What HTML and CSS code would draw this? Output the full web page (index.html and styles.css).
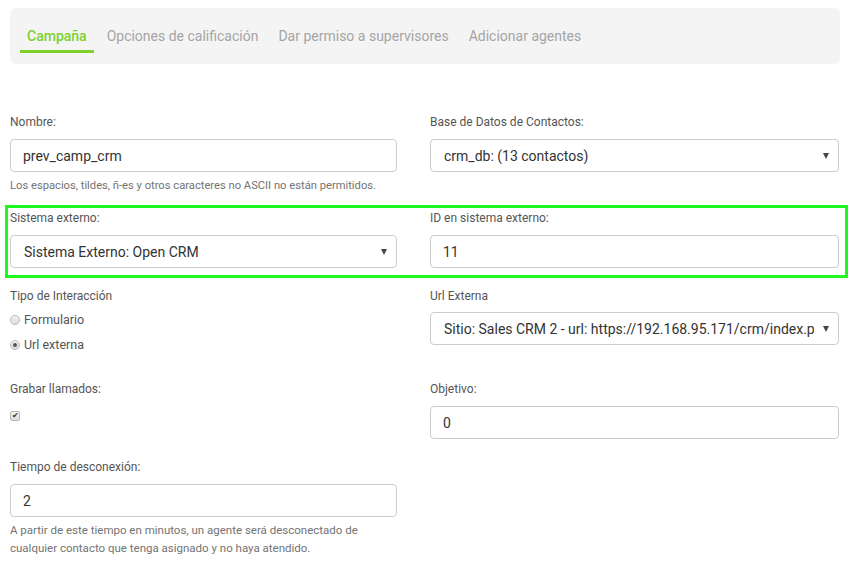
FILE: index.html
```html
<!DOCTYPE html>
<html lang="es">
<head>
  <meta charset="UTF-8">
  <meta name="viewport" content="width=device-width, initial-scale=1.0">
  <title>Campaña</title>
  <link rel="stylesheet" href="styles.css">
</head>
<body>
  <div class="page">
    <ul class="tabs">
      <li class="tab active">Campaña</li>
      <li class="tab">Opciones de calificación</li>
      <li class="tab">Dar permiso a supervisores</li>
      <li class="tab">Adicionar agentes</li>
    </ul>

    <form class="campaign-form">
      <div class="form-row first-row">
        <div class="field">
          <label class="field-label">Nombre:</label>
          <input class="control" type="text" value="prev_camp_crm">
          <p class="help nowrap">Los espacios, tildes, ñ-es y otros caracteres no ASCII no están permitidos.</p>
        </div>
        <div class="field">
          <label class="field-label">Base de Datos de Contactos:</label>
          <div class="select-wrap">
            <select class="control">
              <option>crm_db: (13 contactos)</option>
            </select>
          </div>
        </div>
      </div>

      <div class="form-row highlight">
        <div class="field">
          <label class="field-label">Sistema externo:</label>
          <div class="select-wrap">
            <select class="control">
              <option>Sistema Externo: Open CRM</option>
            </select>
          </div>
        </div>
        <div class="field">
          <label class="field-label">ID en sistema externo:</label>
          <input class="control" type="text" value="11">
        </div>
      </div>

      <div class="form-row interaction-row">
        <div class="field">
          <label class="field-label group-label">Tipo de Interacción</label>
          <label class="option"><input type="radio" name="tipo"> Formulario</label>
          <label class="option"><input type="radio" name="tipo" checked> Url externa</label>
        </div>
        <div class="field">
          <label class="field-label url-label">Url Externa</label>
          <div class="select-wrap">
            <select class="control">
              <option>Sitio: Sales CRM 2 - url: https://192.168.95.171/crm/index.php</option>
            </select>
          </div>
        </div>
      </div>

      <div class="form-row record-row">
        <div class="field">
          <label class="field-label">Grabar llamados:</label>
          <label class="option"><input type="checkbox" checked></label>
        </div>
        <div class="field">
          <label class="field-label">Objetivo:</label>
          <input class="control" type="text" value="0">
        </div>
      </div>

      <div class="form-row timeout-row">
        <div class="field">
          <label class="field-label">Tiempo de desconexión:</label>
          <input class="control" type="text" value="2">
          <p class="help">A partir de este tiempo en minutos, un agente será desconectado de cualquier contacto que tenga asignado y no haya atendido.</p>
        </div>
      </div>
    </form>
  </div>
</body>
</html>
```

FILE: styles.css
```css
/* Campaign form */
body {
  margin: 0;
  font-family: Roboto, Lato, sans-serif;
  color: #555;
  background-color: #fff;
}

.page {
  padding: 8px 11px 0 10px;
}

.tabs {
  list-style: none;
  margin: 0;
  padding: 16px 10px 0;
  height: 40px;
  display: flex;
  gap: 6px;
  background-color: #f4f4f4;
  border-radius: 6px;
}

.tab {
  padding: 0 7px;
  height: 26px;
  line-height: 24px;
  font-size: 14px;
  color: #a5a5a5;
}

.tab.active {
  color: #7dd12a;
  border-bottom: 3px solid #7dd12a;
  font-weight: 500;
}

.form-row {
  display: grid;
  grid-template-columns: 387px 409px;
  column-gap: 33px;
  align-items: start;
}

.first-row {
  margin-top: 49px;
}

.field-label {
  display: block;
  font-size: 12px;
  line-height: 18px;
  margin-bottom: 8px;
  color: #555;
}

.control {
  display: block;
  box-sizing: border-box;
  width: 100%;
  height: 33px;
  padding: 0 12px;
  border: 1px solid #ccc;
  border-radius: 4px;
  background-color: #fff;
  font-family: inherit;
  font-size: 14px;
  color: #333;
  outline: none;
}

select.control {
  appearance: none;
  -webkit-appearance: none;
  padding: 0 24px 0 13px;
}

.select-wrap {
  position: relative;
}

.select-wrap::after {
  content: "";
  position: absolute;
  right: 10px;
  top: 14px;
  border-left: 3.5px solid transparent;
  border-right: 3.5px solid transparent;
  border-top: 6px solid #444;
}

.help {
  margin: 5px 0 0;
  font-size: 11.5px;
  line-height: 18px;
  color: #737373;
}

.nowrap {
  white-space: nowrap;
  font-size: 11.2px;
}

.highlight {
  margin: 10px -8px 0 -5px;
  padding: 1px 5px 7px 2px;
  border: 3px solid #1ef81e;
}

.interaction-row {
  margin-top: 9px;
}

.group-label {
  margin-bottom: 2px;
}

.url-label {
  margin-bottom: 7px;
}

.option {
  display: flex;
  align-items: center;
  gap: 4px;
  font-size: 12.5px;
  line-height: 18px;
  height: 25px;
  color: #555;
}

.option input {
  margin: 0;
  appearance: none;
  -webkit-appearance: none;
  width: 10px;
  height: 10px;
  border: 1px solid #b8b8b8;
  background: linear-gradient(#f2f2f2, #dcdcdc);
  display: grid;
  place-content: center;
}

.option input[type="radio"] {
  border-radius: 50%;
}

.option input[type="radio"]:checked::before {
  content: "";
  width: 4px;
  height: 4px;
  border-radius: 50%;
  background-color: #555;
}

.option input[type="checkbox"] {
  border-radius: 2px;
}

.option input[type="checkbox"]:checked::before {
  content: "\2714";
  font-size: 8px;
  line-height: 8px;
  color: #333;
}

.record-row {
  margin-top: 23px;
}

.record-row .option {
  margin-top: -3px;
}

.timeout-row {
  margin-top: 19px;
}

.timeout-row .help {
  margin-top: 4px;
}
```
